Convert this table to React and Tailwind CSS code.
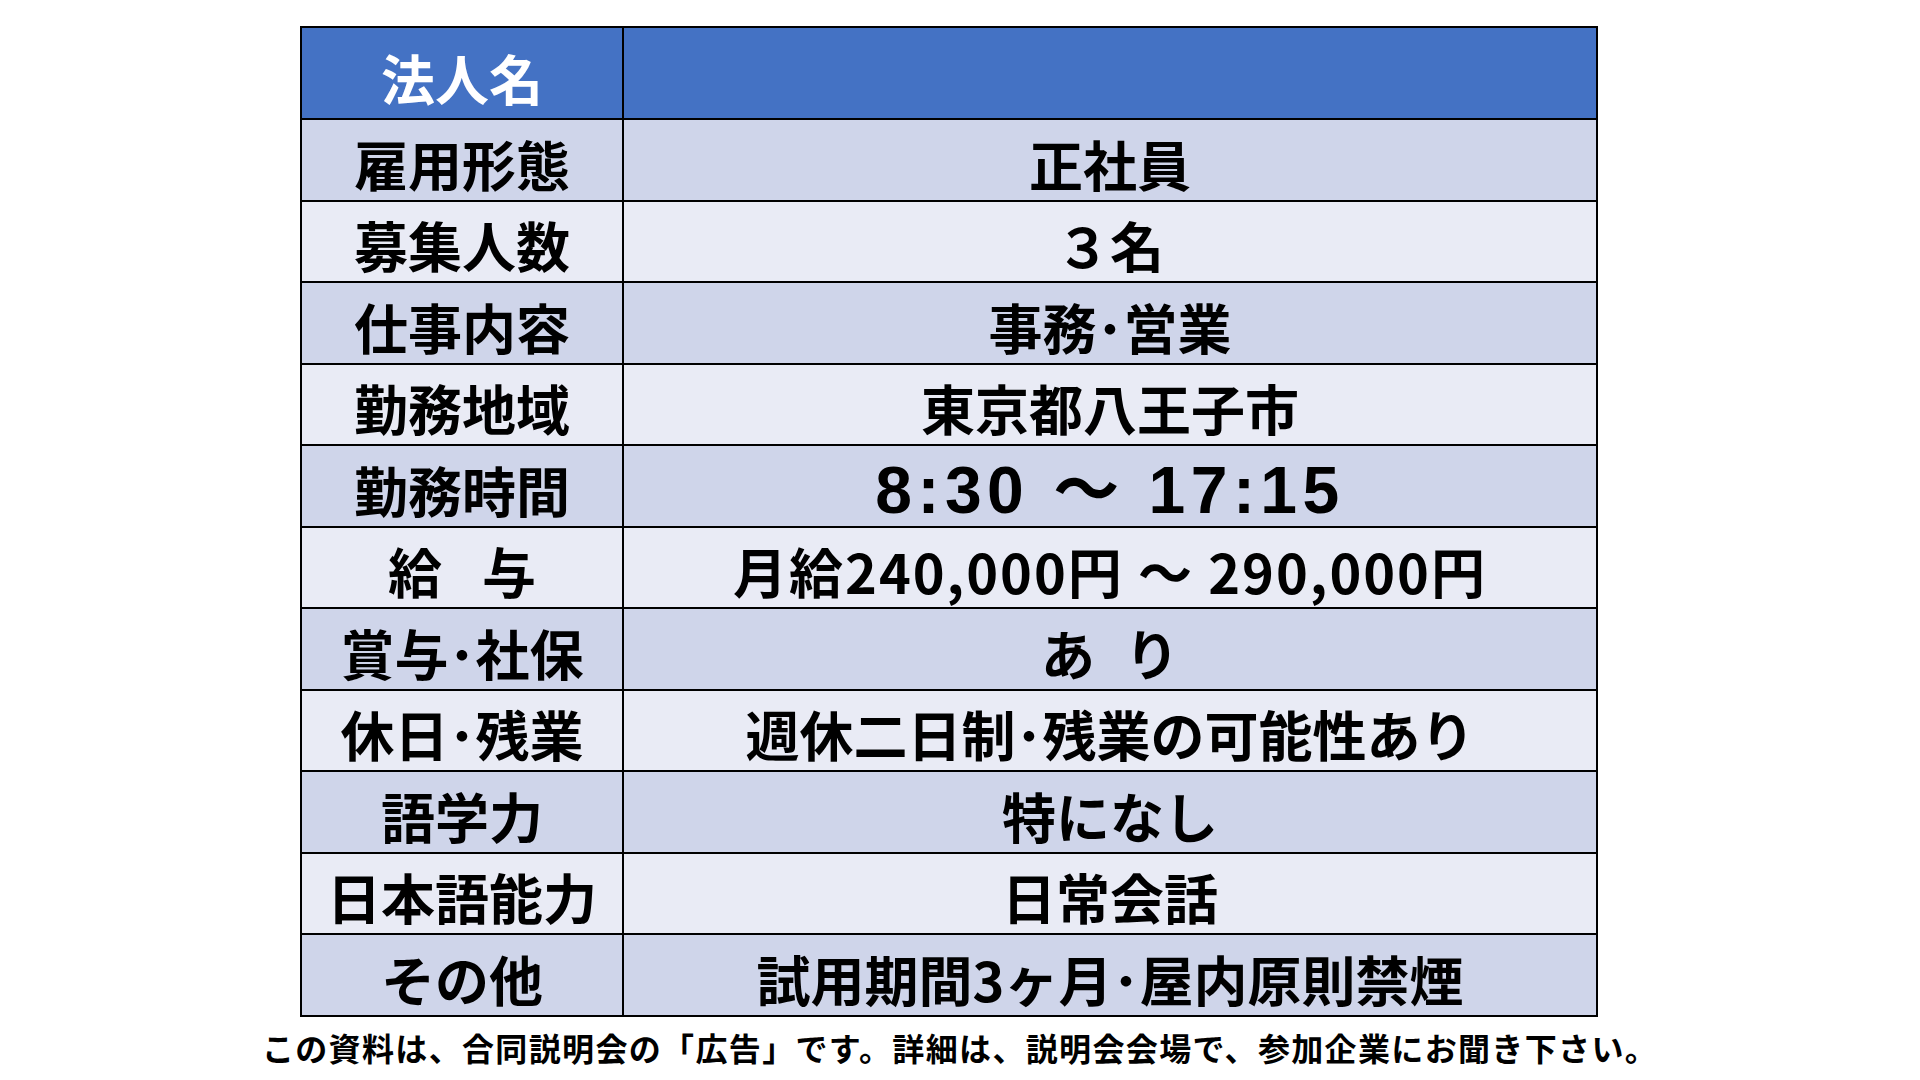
import React from "react";

const JP = "font-['Noto_Sans_CJK_JP','Noto_Sans_CJK_SC',sans-serif]";

const rows = [
  { label: "雇用形態", value: "正社員" },
  { label: "募集人数", value: "３名" },
  { label: "仕事内容", value: "事務･営業" },
  { label: "勤務地域", value: "東京都八王子市" },
  { label: "勤務時間", value: "time" },
  { label: "給与", value: "月給240,000円 ～ 290,000円" },
  { label: "賞与･社保", value: "あり" },
  { label: "休日･残業", value: "週休二日制･残業の可能性あり" },
  { label: "語学力", value: "特になし" },
  { label: "日本語能力", value: "日常会話" },
  { label: "その他", value: "試用期間3ヶ月･屋内原則禁煙" },
];

function Label({ text }) {
  if (text === "給与") {
    return (
      <span className="flex">
        <span>給</span>
        <span className="w-[40px]" />
        <span>与</span>
      </span>
    );
  }
  return <span>{text}</span>;
}

function Value({ text }) {
  if (text === "time") {
    return (
      <span className="font-['Liberation_Sans','Noto_Sans_CJK_JP',sans-serif] text-[66px] font-bold tracking-[5.5px] leading-none">
        8:30 ～ 17:15
      </span>
    );
  }
  if (text === "あり") {
    return (
      <span className="flex">
        <span>あ</span>
        <span className="w-[30px]" />
        <span>り</span>
      </span>
    );
  }
  if (text.startsWith("月給")) {
    return <span className="tracking-[2px]">{text}</span>;
  }
  return <span>{text}</span>;
}

export default function App() {
  return (
    <div className={`w-[1920px] h-[1080px] bg-white overflow-hidden ${JP}`}>
      <div className="ml-[300px] mt-[26px] w-[1298px] border-2 border-black">
        <div className="flex h-[90px] bg-[#4472c4]">
          <div className="w-[322px] border-r-2 border-black flex items-center justify-center pt-[10px] text-white text-[54px] font-bold leading-none">
            法人名
          </div>
          <div className="flex-1" />
        </div>
        {rows.map((r, i) => (
          <div
            key={r.label}
            className={`flex h-[81.5px] border-t-2 border-black ${
              i % 2 === 0 ? "bg-[#cfd5ea]" : "bg-[#e9ebf5]"
            }`}
          >
            <div className="w-[322px] border-r-2 border-black flex items-center justify-center pt-[8px] text-black text-[54px] font-bold leading-none">
              <Label text={r.label} />
            </div>
            <div className="flex-1 flex items-center justify-center pt-[8px] text-black text-[54px] font-bold leading-none">
              <Value text={r.value} />
            </div>
          </div>
        ))}
      </div>
      <div className="mt-[14px] text-center text-black text-[32px] font-bold leading-none tracking-[1.35px]">
        この資料は、合同説明会の「広告」です。詳細は、説明会会場で、参加企業にお聞き下さい。
      </div>
    </div>
  );
}
